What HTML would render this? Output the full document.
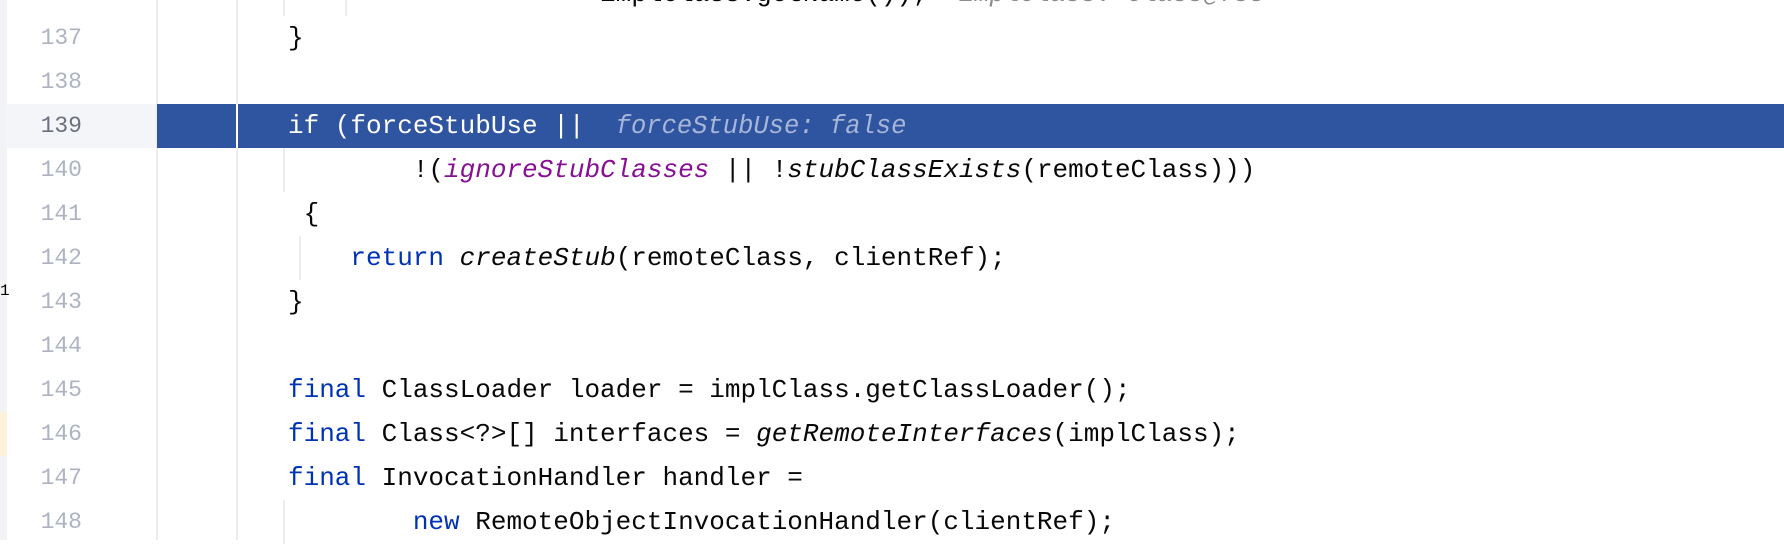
<!DOCTYPE html>
<html><head><style>
body{margin:0;width:1784px;height:540px;overflow:hidden;background:#fff;position:relative;font-family:"Liberation Mono",monospace;}
.g{position:absolute;left:0;top:0;width:157px;height:540px;background:#fff;}
.strip{position:absolute;left:0;top:0;width:7px;height:540px;background:#f2f3f5;}
.sep{position:absolute;top:0;height:540px;width:2px;background:#ebecf0;}
.ln{position:absolute;left:0;width:82px;text-align:right;font-size:23px;color:#aeb3c2;line-height:44px;height:44px;}
.c{position:absolute;left:288px;font-size:26px;line-height:44px;height:44px;white-space:pre;color:#080808;}
.k{color:#0033b3}.p{color:#871094;font-style:italic}.i{font-style:italic}
.h{color:#8c8c8c;font-style:italic;font-size:25.5px}
.gd{position:absolute;width:2px;background:#ebecf0;}
</style></head><body>
<div class="strip"></div>
<div style="position:absolute;left:0;top:412px;width:7px;height:44px;background:#fdf3dc"></div>
<div style="position:absolute;left:7px;top:104px;width:150px;height:44px;background:#f4f5f9"></div>
<div class="sep" style="left:156px"></div>
<div class="sep" style="left:236px"></div>
<div style="position:absolute;left:157px;top:104px;width:1627px;height:44px;background:#2f54a0"></div>
<div style="position:absolute;left:236px;top:104px;width:2px;height:44px;background:#fff"></div>
<div style="position:absolute;left:0;top:282px;font-size:16px;color:#000">1</div>
<!-- guides -->
<div class="gd" style="left:283px;top:-28px;height:44px"></div>
<div class="gd" style="left:345px;top:-28px;height:44px"></div>
<div class="gd" style="left:283px;top:148px;height:44px"></div>
<div class="gd" style="left:299px;top:236px;height:44px"></div>
<div class="gd" style="left:283px;top:500px;height:44px"></div>

<div class="ln" style="top:-28px">136</div>
<div class="ln" style="top:16px">137</div>
<div class="ln" style="top:60px">138</div>
<div class="ln" style="top:104px;color:#6c707e">139</div>
<div class="ln" style="top:148px">140</div>
<div class="ln" style="top:192px">141</div>
<div class="ln" style="top:236px">142</div>
<div class="ln" style="top:280px">143</div>
<div class="ln" style="top:324px">144</div>
<div class="ln" style="top:368px">145</div>
<div class="ln" style="top:412px">146</div>
<div class="ln" style="top:456px">147</div>
<div class="ln" style="top:500px">148</div>

<div class="c" style="top:-28px">                    implClass.getName());  <span class="h">implClass: Class@783</span></div>
<div class="c" style="top:16px">}</div>
<div class="c" style="top:104px;color:#fff">if (forceStubUse ||  <span class="h" style="color:#a7b6d8">forceStubUse: false</span></div>
<div class="c" style="top:148px">        !(<span class="p">ignoreStubClasses</span> || !<span class="i">stubClassExists</span>(remoteClass)))</div>
<div class="c" style="top:192px"> {</div>
<div class="c" style="top:236px">    <span class="k">return</span> <span class="i">createStub</span>(remoteClass, clientRef);</div>
<div class="c" style="top:280px">}</div>
<div class="c" style="top:368px"><span class="k">final</span> ClassLoader loader = implClass.getClassLoader();</div>
<div class="c" style="top:412px"><span class="k">final</span> Class&lt;?&gt;[] interfaces = <span class="i">getRemoteInterfaces</span>(implClass);</div>
<div class="c" style="top:456px"><span class="k">final</span> InvocationHandler handler =</div>
<div class="c" style="top:500px">        <span class="k">new</span> RemoteObjectInvocationHandler(clientRef);</div>
</body></html>
